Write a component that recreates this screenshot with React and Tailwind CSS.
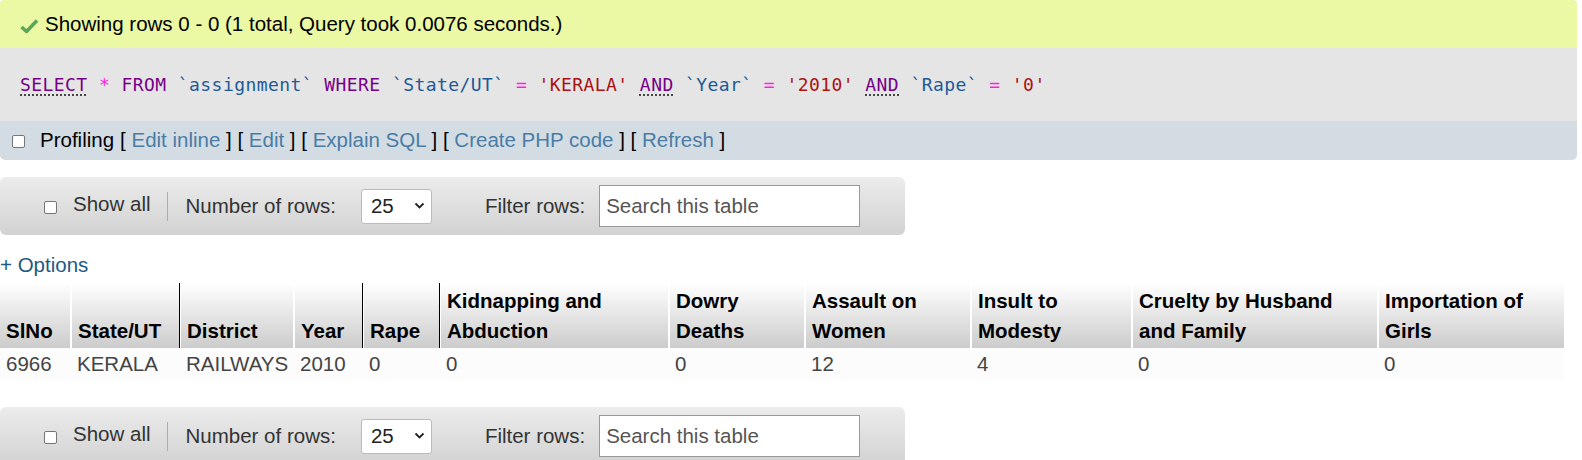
import React from "react";

const cols = [
  { w: 71, h: ["SlNo"], v: "6966" },
  { w: 109, h: ["State/UT"], v: "KERALA" },
  { w: 114, h: ["District"], v: "RAILWAYS", rsz: true },
  { w: 69, h: ["Year"], v: "2010" },
  { w: 77, h: ["Rape"], v: "0", rsz: true },
  { w: 229, h: ["Kidnapping and", "Abduction"], v: "0", rsz: true },
  { w: 136, h: ["Dowry", "Deaths"], v: "0" },
  { w: 166, h: ["Assault on", "Women"], v: "12" },
  { w: 161, h: ["Insult to", "Modesty"], v: "4" },
  { w: 246, h: ["Cruelty by Husband", "and Family"], v: "0" },
  { w: 186, h: ["Importation of", "Girls"], v: "0" },
];

const Check = () => (
  <span className="inline-block w-[13px] h-[13px] border border-[#767676] rounded-[2px] bg-white" />
);

const NavBar = ({ className }) => (
  <div
    className={
      "w-[905px] h-[58px] rounded-[6px] bg-gradient-to-b from-[#ececec] to-[#d2d2d2] flex items-center text-[#333] " +
      className
    }
  >
    <span className="ml-[44px] mt-[2px]">
      <Check />
    </span>
    <span className="ml-[16px] -mt-[3px]">Show all</span>
    <span className="ml-[16px] w-px h-[29px] bg-[#b8a9a9]" />
    <span className="ml-[18px]">Number of rows:</span>
    <div className="ml-[25px] w-[71px] h-[35px] bg-white border border-[#bbb] rounded-[3px] flex items-center pl-[9px] text-[#222]">
      <span>25</span>
      <svg className="ml-[20px]" width="11" height="8" viewBox="0 0 11 8">
        <path d="M1.5 1.5 L5.5 5.5 L9.5 1.5" fill="none" stroke="#222" strokeWidth="1.8" />
      </svg>
    </div>
    <span className="ml-[53px]">Filter rows:</span>
    <div className="ml-[14px] w-[261px] h-[42px] bg-white border border-[#999] flex items-center pl-[6px] text-[#555]">
      Search this table
    </div>
  </div>
);

const K = ({ children }) => (
  <span className="text-[#770088] underline decoration-dotted decoration-[#333] underline-offset-[4px]">{children}</span>
);
const P = ({ children }) => <span className="text-[#770088]">{children}</span>;
const B = ({ children }) => <span className="text-[#1d5a99]">{children}</span>;
const S = ({ children }) => <span className="text-[#aa1111]">{children}</span>;
const O = ({ children }) => <span className="text-[#ff22dd]">{children}</span>;

export default function App() {
  return (
    <div className="w-[1582px] h-[460px] overflow-hidden bg-white font-['Liberation_Sans',Arial,sans-serif] text-[20.5px]">
      <div className="w-[1577px]">
        <div className="h-[48px] bg-[#ebf8a4] flex items-center pl-[20px] rounded-t-[4px]">
          <svg width="19" height="16" viewBox="0 0 19 16" className="mr-[6px] mt-[3px]">
            <path d="M1.5 9 L6.5 13.5 L17 2.5" fill="none" stroke="#5aa65a" strokeWidth="3.5" strokeLinejoin="round" />
          </svg>
          <span className="text-black">Showing rows 0 - 0 (1 total, Query took 0.0076 seconds.)</span>
        </div>
        <div className="h-[73px] bg-[#e5e5e5] flex items-center pl-[20px] font-['DejaVu_Sans_Mono',monospace] text-[18px] tracking-[0.43px]">
          <span className="whitespace-pre">
            <K>SELECT</K> <O>*</O> <P>FROM</P> <B>`assignment`</B> <P>WHERE</P> <B>`State/UT`</B> <O>=</O>{" "}
            <S>'KERALA'</S> <K>AND</K> <B>`Year`</B> <O>=</O> <S>'2010'</S> <K>AND</K> <B>`Rape`</B> <O>=</O>{" "}
            <S>'0'</S>
          </span>
        </div>
        <div className="h-[39px] bg-[#d3dce3] rounded-b-[5px] flex items-center pl-[12px] text-black">
          <span className="mt-[2px]">
            <Check />
          </span>
          <span className="ml-[15px]">Profiling</span>
          <span className="ml-[6px]">
            [ <a className="text-[#4a7ca5]">Edit inline</a> ] [ <a className="text-[#4a7ca5]">Edit</a> ] [{" "}
            <a className="text-[#4a7ca5]">Explain SQL</a> ] [ <a className="text-[#4a7ca5]">Create PHP code</a> ] [{" "}
            <a className="text-[#4a7ca5]">Refresh</a> ]
          </span>
        </div>
      </div>

      <NavBar className="mt-[17px]" />

      <div className="mt-[17px] h-[26px] flex items-center text-[#235a81]">+ Options</div>

      <table className="mt-[5px] border-collapse">
        <thead>
          <tr>
            {cols.map((c, i) => (
              <th
                key={i}
                style={{ width: c.w }}
                className={
                  "relative h-[65px] p-0 pl-[6px] pb-[2px] align-bottom text-left font-bold text-black leading-[30px] bg-gradient-to-b from-white to-[#cccccc] " +
                  (i > 0 ? "border-l-2 border-white" : "")
                }
              >
                {c.rsz && <span className="absolute -left-[2px] top-0 w-px h-full bg-black" />}
                {c.h.map((t, j) => (
                  <div key={j}>{t}</div>
                ))}
              </th>
            ))}
          </tr>
        </thead>
        <tbody>
          <tr className="bg-[#fcfcfc]">
            {cols.map((c, i) => (
              <td key={i} className="h-[32px] p-0 pl-[6px] text-[#444] text-left">
                {c.v}
              </td>
            ))}
          </tr>
        </tbody>
      </table>

      <NavBar className="mt-[27px]" />
    </div>
  );
}
